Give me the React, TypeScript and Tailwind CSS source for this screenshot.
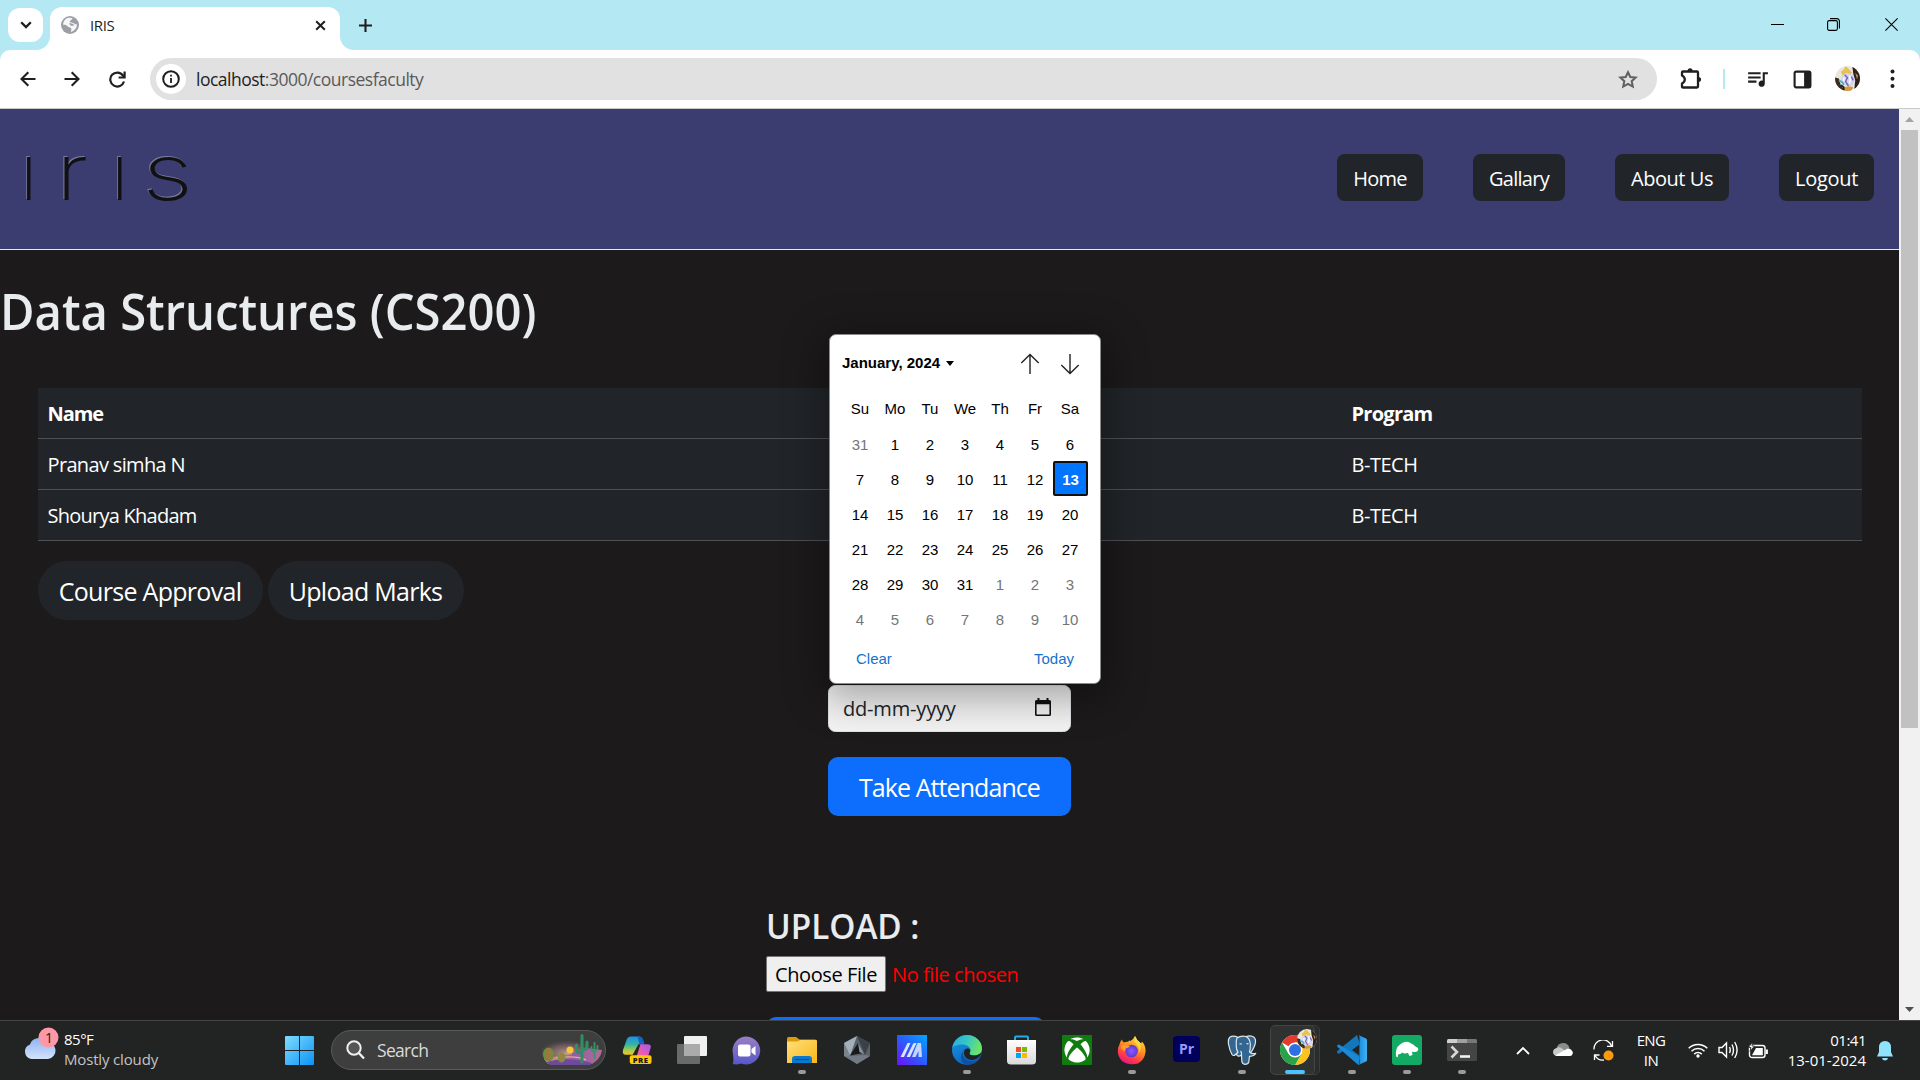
import type { ReactNode } from "react";
import { FaXbox } from "react-icons/fa";
import { MdQueueMusic } from "react-icons/md";

const weekdays = ["Su", "Mo", "Tu", "We", "Th", "Fr", "Sa"];
const days = [31, ...Array.from({ length: 31 }, (_, i) => i + 1), ...Array.from({ length: 10 }, (_, i) => i + 1)];

function Avatar({ size }: { size: number }) {
  return (
    <svg width={size} height={size} viewBox="0 0 26 26">
      <defs>
        <clipPath id={`av${size}`}>
          <circle cx="13" cy="13" r="13" />
        </clipPath>
      </defs>
      <g clipPath={`url(#av${size})`}>
        <rect width="26" height="26" fill="#e9e6dc" />
        <path d="M0 12 4 13 6 20 10 26H0Z" fill="#3b2c20" />
        <path d="M18 0 26 4V20L20 25 21 15 19 8Z" fill="#2c211c" />
        <path d="M21 7 24 10 23 14Z" fill="#b98a4a" />
        <path d="M6 6 9 4 11 0 15 4 18 7 15 9 8 10Z" fill="#e8c24e" />
        <path d="M7 10 12 7 18 9 21 15 17 22 11 20 6 16Z" fill="#d6d4f0" />
        <path d="M10 9 13 12 11 16 14 21M17 11 19 15" stroke="#6c62b8" strokeWidth="1.4" fill="none" />
        <path d="M15 10 16 14 15 18M9 12V16" stroke="#fff" strokeWidth="1.6" fill="none" />
        <path d="M4 15 8 17 9 20" stroke="#4fb3cc" strokeWidth="2" fill="none" />
        <path d="M10 22 14 21 19 22 17 26H9Z" fill="#d49a3c" />
        <path d="M6 20 9 22 9 25" stroke="#2a1d18" strokeWidth="2" fill="none" />
      </g>
    </svg>
  );
}

function TabStrip() {
  return (
    <div className="flex h-[50px] bg-[#b4e8f3]">
      <div className="mt-2 ml-2 flex h-[34px] w-[35px] items-center justify-center rounded-[12px] bg-white">
        <svg width="12" height="8" viewBox="0 0 12 8" fill="none" stroke="#1f1f1f" strokeWidth="2.3">
          <path d="M1.2 1.2 6 6 10.8 1.2" />
        </svg>
      </div>
      <div className="relative mt-[7px] ml-[7px] flex h-[43px] w-[290px] items-center rounded-t-[12px] bg-white pr-[14px] pb-[7px] pl-[11px]">
        <svg className="absolute bottom-0 -left-[14px]" width="14" height="14">
          <path d="M14 0V14H0A14 14 0 0 0 14 0Z" fill="#fff" />
        </svg>
        <svg className="absolute -right-[14px] bottom-0" width="14" height="14">
          <path d="M0 0V14H14A14 14 0 0 1 0 0Z" fill="#fff" />
        </svg>
        <svg width="18" height="18" viewBox="0 0 18 18">
          <circle cx="9" cy="9" r="9" fill="#9aa0a6" />
          <path d="M6 2.2C8 1.8 10 1.6 11.6 2.4 11 4 9.4 3.8 8.8 5 8.4 6.2 10 6.4 11.4 6.8 13 7.4 14.4 8.4 16 8.6 16 12 13.6 15 10 16 9.6 14.6 11 13.4 10.2 12.2 8.6 11 6.6 11 5.6 9.6 4.8 8.4 3 9 2 8.4 2.2 5.6 3.8 3.4 6 2.2Z" fill="#fff" opacity=".9" />
          <path d="M8.6 6.8C10 7.4 12 8 13.6 9.2 12.4 10 11 9.6 9.6 9.4 8.6 8.8 8.2 7.6 8.6 6.8Z" fill="#9aa0a6" />
        </svg>
        <span className="ml-[11px] flex-1 text-[15px] tracking-[-0.4px] text-[#1f1f1f]">IRIS</span>
        <svg width="11" height="11" viewBox="0 0 12 12" stroke="#1f1f1f" strokeWidth="2.2">
          <path d="M1.3 1.3 10.7 10.7M10.7 1.3 1.3 10.7" />
        </svg>
      </div>
      <svg className="mt-[18.5px] ml-[19px]" width="13" height="13" stroke="#1f1f1f" strokeWidth="2.1">
        <path d="M6.5 0V13M0 6.5H13" />
      </svg>
      <div className="mb-[2px] ml-auto flex items-center text-black">
        <svg className="mr-[43px]" width="13" height="13" stroke="currentColor" strokeWidth="1">
          <path d="M0 6.5H13" />
        </svg>
        <svg className="mr-[45px]" width="13" height="13" fill="none" stroke="currentColor" strokeWidth="1.1">
          <rect x=".6" y="2.6" width="9.8" height="9.8" rx="1.6" />
          <path d="M3 .6H10A2.4 2.4 0 0 1 12.4 3V10.4" />
        </svg>
        <svg className="mr-[22px]" width="13" height="13" stroke="currentColor" strokeWidth="1.1">
          <path d="M.4.4 12.6 12.6M12.6.4.4 12.6" />
        </svg>
      </div>
    </div>
  );
}

function Toolbar() {
  return (
    <div className="bg-[#b4e8f3]">
      <div className="flex h-[59px] items-center rounded-t-[10px] border-b border-[#c9c9c9] bg-white text-[#1f1f1f]">
        <svg className="ml-[20px]" width="16" height="16" viewBox="0 0 16 16" fill="none" stroke="currentColor" strokeWidth="2.1">
          <path d="M15.5 8H2M8.3 1.2 1.5 8 8.3 14.8" />
        </svg>
        <svg className="ml-[28px]" width="16" height="16" viewBox="0 0 16 16" fill="none" stroke="currentColor" strokeWidth="2.1">
          <path d="M.5 8H14M7.7 1.2 14.5 8 7.7 14.8" />
        </svg>
        <svg className="ml-[29px]" width="17" height="17" viewBox="0 0 17 17" fill="none" stroke="currentColor" strokeWidth="2.2">
          <path d="M15 10.5A7 7 0 1 1 14 4.5L15.5 6.2" />
          <path d="M15.6 .5V6.5H9.6" />
        </svg>
        <div className="ml-[24px] flex h-[42px] w-[1507px] items-center rounded-full bg-[#e1e1e1] pr-[19px] pl-[6px]">
          <div className="flex size-[30px] items-center justify-center rounded-full bg-white">
            <svg width="18" height="18" viewBox="0 0 18 18">
              <circle cx="9" cy="9" r="7.8" fill="none" stroke="#1f1f1f" strokeWidth="2" />
              <path d="M8.1 4.8H9.9V6.6H8.1ZM8.1 8H9.9V13H8.1Z" fill="#1f1f1f" />
            </svg>
          </div>
          <span className="ml-[10px] flex-1 pt-px text-[17.5px] tracking-[-0.5px] text-[#5a5a5a]">
            <span className="text-[#1f1f1f]">localhost</span>:3000/coursesfaculty
          </span>
          <svg width="20" height="19" viewBox="0 0 20 19" fill="none" stroke="#5f6063" strokeWidth="2">
            <path d="M10 2.2 12.3 7 17.6 7.6 13.7 11.2 14.8 16.5 10 13.8 5.2 16.5 6.3 11.2 2.4 7.6 7.7 7Z" />
          </svg>
        </div>
        <svg className="ml-[23px]" width="22" height="22" viewBox="0 0 22 22" fill="none" stroke="#1f1f1f" strokeWidth="2.3">
          <path d="M3 3.5H17Q18 3.5 18 4.5V18.5Q18 19.5 17 19.5H3Q2 19.5 2 18.5V15.5Q4.8 14 4.8 11.5 4.8 9 2 7.5V4.5Q2 3.5 3 3.5Z" strokeLinejoin="round" />
          <path d="M7.6 3A2.5 2.7 0 0 1 12.6 3ZM18.4 9A2.7 2.5 0 0 1 18.4 14Z" fill="#1f1f1f" stroke="none" />
        </svg>
        <div className="ml-[21px] h-[20px] w-[2px] bg-[#b4e8f3]" />
        <MdQueueMusic className="mb-px ml-[20px]" size={25} />
        <svg className="ml-[23px]" width="19" height="19" viewBox="0 0 18 19">
          <rect x="1.1" y="1.6" width="15.8" height="15.8" rx="1.6" fill="none" stroke="#1f1f1f" strokeWidth="2.1" />
          <path d="M10.6 1.5H17V17.5H10.6Z" fill="#1f1f1f" />
        </svg>
        <div className="mb-[2px] ml-[23px]">
          <Avatar size={25} />
        </div>
        <svg className="ml-[30px]" width="5" height="20" fill="#1f1f1f">
          <circle cx="2.5" cy="2.5" r="2" />
          <circle cx="2.5" cy="9.7" r="2" />
          <circle cx="2.5" cy="17" r="2" />
        </svg>
      </div>
    </div>
  );
}

function NavButton({ width, children }: { width: string; children: ReactNode }) {
  return (
    <div className={`flex h-[47px] items-center justify-center rounded-[7.5px] bg-[#212529] pt-[2px] text-[20px] text-white ${width}`}>
      {children}
    </div>
  );
}

function SiteHeader() {
  return (
    <header className="flex h-[141px] items-start justify-between border-b border-[#e9e6f5] bg-[#3b3d70] pr-[25px]">
      <div className="flex pt-[15px] pl-[20px] font-['Inter'] text-[78px] leading-[96px] font-extralight text-[#111114] [text-shadow:-0.8px_-0.8px_0_rgba(200,200,210,0.45)]">
        <span className="w-[36px]">ı</span>
        <span className="w-[55px] origin-left scale-x-120">r</span>
        <span className="w-[31px]">ı</span>
        <span className="origin-left scale-x-130">s</span>
      </div>
      <nav className="mt-[45px] flex gap-[50px]">
        <NavButton width="w-[86px] tracking-[-0.76px]">Home</NavButton>
        <NavButton width="w-[92px] tracking-[-0.72px]">Gallary</NavButton>
        <NavButton width="w-[114px] tracking-[-0.45px]">About Us</NavButton>
        <NavButton width="w-[95px] tracking-[-0.29px]">Logout</NavButton>
      </nav>
    </header>
  );
}

function StudentTable() {
  return (
    <table className="mx-[38px] mt-[47px] w-[1824px] table-fixed bg-[#212529] text-left text-[20px] leading-[30px] text-white [&_td]:px-[9.5px] [&_td]:pt-[11px] [&_td]:pb-[9px] [&_th]:px-[9.5px] [&_th]:pt-[11px] [&_th]:pb-[9px] [&_tr]:border-b [&_tr]:border-[#4d5154]">
      <thead>
        <tr>
          <th className="w-[660px] tracking-[-1.1px]">Name</th>
          <th />
          <th className="w-[520px] tracking-[-0.73px]">Program</th>
        </tr>
      </thead>
      <tbody>
        <tr>
          <td className="tracking-[-0.65px]">Pranav simha N</td>
          <td />
          <td className="tracking-[-0.47px]">B-TECH</td>
        </tr>
        <tr>
          <td className="tracking-[-0.75px]">Shourya Khadam</td>
          <td />
          <td className="tracking-[-0.47px]">B-TECH</td>
        </tr>
      </tbody>
    </table>
  );
}

function DatePicker() {
  return (
    <div className="absolute top-[-351px] left-px z-10 h-[350px] w-[272px] rounded-[7px] border border-[#8b8b8b] bg-white font-['Liberation_Sans'] text-[15px] text-black shadow-[0_8px_40px_8px_rgba(0,0,0,0.32)]">
      <div className="flex h-[56px] items-center pl-[12px] font-bold">
        <span>January, 2024</span>
        <svg className="ml-[6px]" width="8" height="5">
          <path d="M0 0H8L4 5Z" />
        </svg>
        <svg className="mt-px ml-auto" width="20" height="22" fill="none" stroke="#222" strokeWidth="1.4">
          <path d="M10 21V1.5M1.3 10 10 1.5 18.7 10" />
        </svg>
        <svg className="mt-px mr-[20px] ml-[20px]" width="20" height="22" fill="none" stroke="#222" strokeWidth="1.4">
          <path d="M10 1V20.5M1.3 12 10 20.5 18.7 12" />
        </svg>
      </div>
      <div className="mr-[12px] ml-[13px] grid grid-cols-7 text-center">
        {weekdays.map((d) => (
          <span key={d} className="h-[35px] pr-px leading-[36px]">
            {d}
          </span>
        ))}
        {days.map((d, i) =>
          i === 13 ? (
            <span key={i} className="h-[35px] rounded-[2px] border-2 border-[#101010] bg-[#0075ff] leading-[33px] font-bold text-white">
              {d}
            </span>
          ) : (
            <span key={i} className={`h-[35px] pr-px leading-[38px] ${i < 1 || i > 31 ? "text-[#757575]" : ""}`}>
              {d}
            </span>
          ),
        )}
      </div>
      <div className="mt-[13px] flex justify-between pr-[26px] pl-[26px] leading-[20px] text-[#1372cf]">
        <span>Clear</span>
        <span>Today</span>
      </div>
    </div>
  );
}

function Page() {
  return (
    <main className="h-[911px] w-[1899px] overflow-hidden bg-[#1c1a1b]">
      <SiteHeader />
      <h1 className="mt-[31px] w-max origin-left scale-x-[0.943] text-[50px] leading-[60px] font-semibold text-[#e9ecef]">Data Structures (CS200)</h1>
      <StudentTable />
      <div className="mt-5 ml-[38px] flex gap-[5px] text-[25px] text-white">
        <div className="flex h-[59px] w-[225px] items-center justify-center rounded-[30px] bg-[#212529] pt-[2px] pr-px tracking-[-0.7px]">Course Approval</div>
        <div className="flex h-[59px] w-[196px] items-center justify-center rounded-[30px] bg-[#212529] pt-[2px] pr-px tracking-[-0.73px]">Upload Marks</div>
      </div>
      <div className="relative mt-[65px] ml-[828px] w-[243px]">
        <DatePicker />
        <div className="flex h-[47px] items-center justify-between rounded-[7.5px] border border-[#dee2e6] bg-[#f4f4f4] pr-[19px] pl-[14px] text-[#212529]">
          <span className="pt-px text-[20px] tracking-[-0.18px]">dd-mm-yyyy</span>
          <svg className="mb-[3px]" width="16" height="18" viewBox="0 0 16 18">
            <path d="M2.5 0H4.5V2H11.5V0H13.5V2H14.5Q16 2 16 3.5V16.5Q16 18 14.5 18H1.5Q0 18 0 16.5V3.5Q0 2 1.5 2H2.5ZM1.6 6.2V16.4H14.4V6.2Z" fill="#111" fillRule="evenodd" />
          </svg>
        </div>
        <div className="mt-[25px] flex h-[59px] items-center justify-center rounded-[10px] bg-[#0d6efd] pt-[2px] text-[25px] tracking-[-0.93px] text-white">Take Attendance</div>
      </div>
      <section className="mt-[89px] ml-[766px]">
        <h2 className="w-max origin-left scale-x-95 text-[35px] leading-[42px] font-semibold text-[#e9ecef]">UPLOAD :</h2>
        <div className="mt-[9px] flex items-center text-[20px] text-[#ff0000]">
          <div className="flex h-[36px] w-[120px] items-center justify-center rounded-[2px] border border-[#767676] bg-[#efefef] pt-[2px] tracking-[-0.41px] text-black">Choose File</div>
          <span className="ml-[6px] pt-[2px] tracking-[-0.43px]">No file chosen</span>
        </div>
        <div className="mt-[25px] h-[59px] w-[279px] rounded-[10px] bg-[#0d6efd]" />
      </section>
    </main>
  );
}

function ScrollBar() {
  return (
    <div className="flex h-[911px] w-[21px] flex-col items-center justify-between bg-[#f1f1f1]">
      <div className="flex flex-col items-center">
        <svg className="my-[8px]" width="9" height="5">
          <path d="M0 5H9L4.5 0Z" fill="#a3a3a3" />
        </svg>
        <div className="h-[598px] w-[17px] bg-[#c1c1c1]" />
      </div>
      <svg className="mb-[8px]" width="9" height="5">
        <path d="M0 0H9L4.5 5Z" fill="#505050" />
      </svg>
    </div>
  );
}

function TaskIcon({ running = false, children }: { running?: boolean; children: ReactNode }) {
  return (
    <div className="flex w-[55px] flex-col items-center">
      <div className="mt-[13px] flex h-[32px] items-center">{children}</div>
      {running && <div className="mt-[4px] h-[4px] w-[8px] rounded-full bg-[#9a9a9a]" />}
    </div>
  );
}

function Defs() {
  return (
    <svg className="absolute size-0">
      <defs>
        <linearGradient id="win" x1="0" y1="0" x2="1" y2="1"><stop stopColor="#7fdcff" /><stop offset="1" stopColor="#0c93f5" /></linearGradient>
        <linearGradient id="copA" x1="0" y1="0" x2="0" y2="1"><stop stopColor="#1f8fe8" /><stop offset=".45" stopColor="#36b5a0" /><stop offset=".8" stopColor="#b5cf3c" /><stop offset="1" stopColor="#f5c518" /></linearGradient>
        <linearGradient id="copB" x1="1" y1="0" x2="0" y2="1"><stop stopColor="#a259f0" /><stop offset=".5" stopColor="#e45ab8" /><stop offset="1" stopColor="#fb7a5c" /></linearGradient>
        <linearGradient id="cloud" x1="0" y1="0" x2="0" y2="1"><stop stopColor="#8fb4f0" /><stop offset="1" stopColor="#d3e2fb" /></linearGradient>
        <linearGradient id="chat" x1="0" y1="0" x2="0" y2="1"><stop stopColor="#9b7fc4" /><stop offset="1" stopColor="#5558c9" /></linearGradient>
        <linearGradient id="fold" x1="0" y1="0" x2="1" y2="1"><stop stopColor="#ffe07a" /><stop offset="1" stopColor="#f9b618" /></linearGradient>
        <linearGradient id="asus" x1="1" y1="0" x2="0" y2="1"><stop stopColor="#00a8ff" /><stop offset=".5" stopColor="#2b5cff" /><stop offset="1" stopColor="#7010f5" /></linearGradient>
        <linearGradient id="edgeA" x1="0" y1="0" x2="1" y2=".3"><stop stopColor="#2aa9e0" /><stop offset=".5" stopColor="#35c4c8" /><stop offset="1" stopColor="#6be36a" /></linearGradient>
        <linearGradient id="edgeB" x1="0" y1="0" x2=".5" y2="1"><stop stopColor="#1b9de2" /><stop offset="1" stopColor="#0a62c4" /></linearGradient>
        <linearGradient id="ff" x1=".8" y1="0" x2=".3" y2="1"><stop stopColor="#ffe14a" /><stop offset=".4" stopColor="#ff9a1f" /><stop offset=".75" stopColor="#ff3b47" /><stop offset="1" stopColor="#e3158a" /></linearGradient>
        <radialGradient id="ffB"><stop stopColor="#9059ff" /><stop offset="1" stopColor="#5b3bd6" /></radialGradient>
        <linearGradient id="vs" x1="0" y1="0" x2="1" y2="0"><stop stopColor="#1a8ad6" /><stop offset="1" stopColor="#3fb2f5" /></linearGradient>
        <linearGradient id="store" x1="0" y1="0" x2="0" y2="1"><stop stopColor="#ffffff" /><stop offset="1" stopColor="#d9d9d9" /></linearGradient>
        <radialGradient id="sky" cx=".45" cy=".6"><stop stopColor="#e0aca4" stopOpacity=".85" /><stop offset=".6" stopColor="#a88080" stopOpacity=".45" /><stop offset="1" stopColor="#6a5558" stopOpacity="0" /></radialGradient>
        <linearGradient id="sand" x1="0" y1="0" x2="1" y2="0"><stop stopColor="#e0a078" /><stop offset=".5" stopColor="#8c5ea8" /><stop offset="1" stopColor="#b56a9a" /></linearGradient>
      </defs>
    </svg>
  );
}

function Taskbar() {
  return (
    <div className="flex h-[60px] border-t border-[#444444] bg-[#222323] text-[15px] text-white">
      <Defs />
      <div className="flex w-[285px] pl-[24px]">
        <svg className="mt-[5px]" width="36" height="38" viewBox="0 0 36 38">
          <circle cx="23" cy="18" r="6" fill="#f5811f" />
          <path d="M7.5 35A7.5 7.5 0 0 1 6 20.5 9 9 0 0 1 22 18 8.5 8.5 0 0 1 24 35Z" fill="url(#cloud)" transform="translate(0 -2)" />
          <circle cx="24.5" cy="11.5" r="10" fill="#ff98a6" />
          <text x="25" y="16.5" textAnchor="middle" fontSize="14" fill="#2a1a1c" fontFamily="Open Sans">1</text>
        </svg>
        <div className="ml-[4px] pt-[8px] leading-[20px]">
          <div className="tracking-[-0.5px]">85°F</div>
          <div className="tracking-[-0.16px] text-[#c4c4c4]">Mostly cloudy</div>
        </div>
      </div>
      <svg className="mt-[15px]" width="29" height="29" fill="url(#win)">
        <path d="M0 1Q0 0 1 0H14V14H0ZM15 0H28Q29 0 29 1V14H15ZM0 15H14V29H1Q0 29 0 28ZM15 15H29V28Q29 29 28 29H15Z" />
      </svg>
      <div className="mt-[9px] ml-[17px] flex h-[40px] w-[275px] items-center rounded-full border border-[#5a5a5a] bg-[#3e3e3e] pl-[14px]">
        <svg width="19" height="20" viewBox="0 0 19 20" fill="none" stroke="#f0f0f0" strokeWidth="2">
          <circle cx="8" cy="8" r="6.7" fill="#555" />
          <path d="M12.8 13 18 18.5" strokeWidth="2.4" />
        </svg>
        <span className="ml-[12px] flex-1 pt-px text-[17.5px] tracking-[-0.7px] text-[#dadada]">Search</span>
        <svg className="mr-[3px]" width="60" height="34" viewBox="0 0 60 34">
          <ellipse cx="28" cy="18" rx="30" ry="14" fill="url(#sky)" />
          <circle cx="28" cy="17" r="3.5" fill="#ffc53a" />
          <path d="M30 20 44 15 60 17Q59 24 54 28L50 31H6L2 26Q16 22 30 22Z" fill="url(#sand)" />
          <path d="M4 29Q24 23 50 30L48 32H8Z" fill="#6d4a9a" />
          <path d="M14 25Q34 22 44 27" stroke="#f0a888" strokeWidth="1.5" fill="none" />
          <ellipse cx="6.5" cy="21.5" rx="5.5" ry="7" fill="#6c8f3a" />
          <ellipse cx="19.5" cy="24.5" rx="4" ry="5" fill="#7f9440" />
          <path d="M4 17V27M6.5 15V28M9 17V27M18 21V29M21 21V29" stroke="#c06a4a" strokeWidth=".8" />
          <path d="M40 29V2.5M34.5 12V17Q34.5 19.5 37 19.5H40M45 9V14Q45 16.5 42 16.5H40" stroke="#2f8f62" strokeWidth="3" strokeLinecap="round" fill="none" />
          <path d="M52.5 25V10M49.5 14V16.5Q49.5 18.5 52 18.5M55.5 13V15.5Q55.5 17.5 53 17.5" stroke="#3a9468" strokeWidth="1.8" strokeLinecap="round" fill="none" />
        </svg>
      </div>

      <div className="ml-[3px] flex">
        <TaskIcon>
          <svg width="30" height="30" viewBox="0 0 31 30">
            <path d="M9 1H18Q20.5 1 21.5 4L23 9H17L11 20H4Q0 20 1 15L5 4Q6 1 9 1Z" fill="url(#copA)" />
            <path d="M16 1H18Q20.5 1 21.5 4L23 9H18Z" fill="#1463c4" />
            <path d="M19 9H26Q31 9 29.5 13L27.5 20 22 24H12Q15 23 16 19Z" fill="url(#copB)" />
            <rect x="8" y="20.5" width="22.5" height="9" rx="2" fill="#ffc708" />
            <text x="19.3" y="28" textAnchor="middle" fontSize="8" fontWeight="800" letterSpacing=".5" fill="#1a1a1a" fontFamily="Open Sans">PRE</text>
          </svg>
        </TaskIcon>
        <TaskIcon>
          <svg width="30" height="28" viewBox="0 0 30 28">
            <rect x="0" y="8" width="23" height="20" rx="1" fill="#6a6a6a" />
            <rect x="7" y="0" width="23" height="20" rx="1" fill="#f0f0f0" />
            <path d="M7 8H23V20H7Z" fill="#ababab" />
          </svg>
        </TaskIcon>
        <TaskIcon>
          <svg className="mr-px" width="29" height="29" viewBox="0 0 29 29">
            <path d="M14.5 0.5A14 14 0 1 1 9 27.5Q5 29 .8 28 2 25 .8 17A14 14 0 0 1 14.5 .5Z" fill="url(#chat)" />
            <rect x="6" y="8.5" width="12.5" height="12" rx="2" fill="#fff" />
            <path d="M19.5 13 23.5 10V19.5L19.5 16.5Z" fill="#fff" />
          </svg>
        </TaskIcon>
        <TaskIcon running>
          <svg width="30" height="28" viewBox="0 0 30 28">
            <path d="M0 2.5Q0 1 1.5 1H9L12.5 3.5H28Q30 3.5 30 5V12H0Z" fill="#dd9a06" />
            <path d="M0 5.5H10L13.5 4H29Q30 4 30 5.5V27H0Z" fill="url(#fold)" />
            <path d="M5 27V23Q5 20 8 20H22Q25 20 25 23V27Z" fill="#0c79d0" />
            <path d="M8 23.5H22" stroke="#0a4f94" strokeWidth="1.2" />
          </svg>
        </TaskIcon>
        <TaskIcon>
          <svg width="26" height="28" viewBox="0 0 26 28">
            <path d="M13 0 26 7V20L13 28 0 20V7Z" fill="#59616a" />
            <path d="M13 0 26 7 21 19Z" fill="#3c4148" />
            <path d="M13 0 0 7 6 20Z" fill="#a4aeb8" />
            <path d="M0 20 6 20 21 19 26 20 13 28Z" fill="#727b85" />
            <path d="M0 7 6 20H0Z" fill="#7b848e" />
            <path d="M14 7 19 17 6 19.5Z" fill="#17191c" />
            <path d="M14 7 20 18 15.5 16Z" fill="#8d97a1" />
          </svg>
        </TaskIcon>
        <TaskIcon>
          <svg width="30" height="30" viewBox="0 0 30 30">
            <rect width="30" height="30" fill="url(#asus)" />
            <path d="M3.5 22 10.5 8H13.5L7 22ZM9.5 22 16 9Q16.500 8 18 8H19.5L13 22Z" fill="#d9e4ff" />
            <path d="M20.5 8H24L25 22H21.5V16L18.5 22H15Z" fill="#c3d4ff" />
          </svg>
        </TaskIcon>
        <TaskIcon running>
          <svg width="30" height="30" viewBox="0 0 30 30">
            <circle cx="15" cy="15" r="15" fill="url(#edgeB)" />
            <path d="M.2 13C1.5 5 8 0 15 0 24 0 30 6.5 30 13.5 30 18.5 26 20.5 22 20.5 18.5 20.5 17 19.3 17.8 18 19.5 15.5 18 10 11.5 9.5 6 9.2 1.5 11 .2 13Z" fill="url(#edgeA)" />
            <path d="M12.5 15C10 18 10.5 24 17 26 21 27.3 25.5 25.5 28 23 25 28 20 30 15.5 30 8.5 29 6.5 20 12.5 15Z" fill="#124f9c" />
            <path d="M12.5 15C14 13.5 16.5 13 18.2 14.5 18.3 16 18 17.3 17.5 18.3 17.2 19.5 18.5 20.5 22 20.5 25.5 20.5 28 19 30 17 28.5 22 23 26.5 17 24.5 12.5 23 11 18.5 12.5 15Z" fill="#1f2223" />
          </svg>
        </TaskIcon>
        <TaskIcon>
          <svg width="29" height="30" viewBox="0 0 29 30">
            <path d="M8 6V2.5Q8 1.5 9 1.5H20Q21 1.5 21 2.5V6" fill="none" stroke="#1fb0e8" strokeWidth="2" />
            <path d="M0 5H29V26Q29 29.5 25 29.5H4Q0 29.5 0 26Z" fill="url(#store)" />
            <path d="M9 12H14V17H9Z" fill="#f25022" />
            <path d="M15 12H20V17H15Z" fill="#7fba00" />
            <path d="M9 18H14V23H9Z" fill="#00a4ef" />
            <path d="M15 18H20V23H15Z" fill="#ffb900" />
          </svg>
        </TaskIcon>
        <TaskIcon>
          <div className="flex size-[30px] items-center justify-center rounded-[1px] bg-[#107c10]">
            <FaXbox size={26} color="#fff" />
          </div>
        </TaskIcon>
        <TaskIcon running>
          <svg width="29" height="30" viewBox="0 0 29 30">
            <path d="M2 11Q2.5 7 5 4.5 5.2 6.5 7 7.5 9 6.5 11 6.8 13 4.5 13.5 6 16 5 18 1 19.5 5 23 7.5 24.5 9 25 6.5 29 11 28.5 17 27.5 25 21 28.5 12 31 5 26 0 21 1 14 1 12 2 11Z" fill="url(#ff)" />
            <circle cx="14.5" cy="16" r="6.3" fill="url(#ffB)" />
            <path d="M4 11Q9 8 13 11.5 11 13 8.5 13.5 9 16 7.5 16 4 14.5 4 11Z" fill="#ff9a2a" />
            <path d="M18 1Q16 6 20 10 23 13 21.5 18 25 14 23 7.5 19.5 5 18 1Z" fill="#ffd83c" />
          </svg>
        </TaskIcon>
        <TaskIcon>
          <div className="mb-[3px] flex h-[26px] w-[27px] items-center justify-center rounded-[4px] bg-[#00005b] text-[14px] font-bold text-[#9999ff]">Pr</div>
        </TaskIcon>
        <TaskIcon running>
          <svg width="30" height="30" viewBox="0 0 30 30" fill="#336791" stroke="#dfe6ec" strokeWidth="1.2" strokeLinejoin="round">
            <path d="M11 2.2Q6 .2 3 2 .8 4 1.5 9 2.500 15 5 19.5 6.5 21.500 8.500 19.5L11 17Z" />
            <path d="M19 1.500Q24-.2 27 2.200 29.500 5 28 9.500 26.500 14 24 17.500L19 15Z" />
            <path d="M10 3Q14 .2 19 1.500 23 3.500 23.300 9 23.500 13 22.500 17 24 19.500 28.800 18.300 27 21.500 22.500 21.300L21.800 27Q21 29.300 18 29.300 15 29 14.800 26L14.500 20Q11 22.500 9.500 19.500L11 17Q9 15 9.300 10 9 5 10 3Z" />
            <path d="M12.5 9Q14 8.300 14.500 9.500M19.500 9Q20.500 8.200 21.500 9M14.500 20Q15 17.500 13.500 16" fill="none" />
          </svg>
        </TaskIcon>
        <div className="relative mt-[4px] mr-[4px] ml-px h-[50px] w-[50px]">
          <div className="absolute inset-y-0 left-[2px] w-[48px] rounded-[5px] border border-[#3c3c3c] bg-[#2a2b2b]" />
          <div className="relative h-[50px] w-[45px] rounded-[5px] border border-[#434444] bg-[#303131]">
            <svg className="absolute top-[9px] left-[9px]" width="30" height="30" viewBox="0 0 30 30">
              <circle cx="15" cy="15" r="15" fill="#fff" />
              <path d="M15 15 2 7.5A15 15 0 0 1 28 7.5H15Z" fill="#e33b2e" />
              <path d="M28 7.5A15 15 0 0 1 15 30L21.5 18.7 15 7.5Z" fill="#fcc31e" />
              <path d="M2 7.5A15 15 0 0 0 15 30L21.5 18.7 15 22 8.5 18.7Z" fill="#2aa24a" />
              <circle cx="15" cy="15" r="7.5" fill="#fff" />
              <circle cx="15" cy="15" r="6" fill="#2f6fe4" />
            </svg>
            <div className="absolute top-[3px] left-[26px]">
              <Avatar size={20} />
            </div>
            <div className="absolute bottom-0 left-[14px] h-[4px] w-[20px] rounded-full bg-[#4cc2ff]" />
          </div>
        </div>
        <TaskIcon running>
          <svg width="30" height="30" viewBox="0 0 30 30">
            <path d="M21.5 0 6 14 2.5 11.5Q1.5 11 1 11.6L0 12.7Q-.3 13.500 .5 14.2L20 30 22.5 22V8Z" fill="#1277bd" transform="translate(0 30) scale(1 -1)" />
            <path d="M1 9.8Q1.5 9 2.5 9.8L22.5 22 21.5 30 .5 12Q-.3 11.200 .3 10.5Z" fill="#1a8ad6" />
            <path d="M22.5 9.500V20.500L15 15Z" fill="#222323" />
            <path d="M21.5 0 29 3.5Q30 4 30 5V25Q30 26 29 26.5L21.5 30Q22.5 29 22.5 28V2Q22.5 1 21.5 0Z" fill="url(#vs)" />
          </svg>
        </TaskIcon>
        <TaskIcon running>
          <svg width="30" height="30" viewBox="0 0 30 30">
            <rect width="30" height="30" rx="3" fill="#13aa63" />
            <path d="M4 21Q3 13 8 9.5 13 5 18.5 8 22 9.5 23.5 11.5L26 13Q27 15 25 16.5 22 17.5 20 16.5L20.5 20 17.5 21 16 18Q12 19 10 17.5L8.5 19Q5.5 18.5 5.8 22Q4.5 22.5 4 21Z" fill="#fff" />
          </svg>
        </TaskIcon>
        <TaskIcon running>
          <svg width="30" height="22" viewBox="0 0 30 22">
            <rect width="30" height="22" rx="1.5" fill="#454545" />
            <path d="M0 4V1.5Q0 0 1.5 0H10V4Z" fill="#cfcfcf" />
            <path d="M10 0H20V4H10Z" fill="#a0a0a0" />
            <path d="M20 0H28.5Q30 0 30 1.5V4H20Z" fill="#777" />
            <path d="M4.5 7.5 10 13 4.5 18.5" stroke="#d8d8d8" strokeWidth="2.6" fill="none" />
            <path d="M13 17.5H23" stroke="#f3f3f3" strokeWidth="2.6" />
          </svg>
        </TaskIcon>
      </div>

      <div className="ml-auto flex h-[58px] w-[417px] items-center">
        <div className="flex w-[40px] justify-center">
          <svg width="14" height="9" fill="none" stroke="#fff" strokeWidth="1.8">
            <path d="M1 8 7 2 13 8" />
          </svg>
        </div>
        <div className="flex w-[40px] justify-center">
          <svg width="20" height="14" viewBox="0 0 20 14">
            <path d="M3 6Q5 0 10 0 15 0 16.5 5L10 9Z" fill="#8c8c8c" />
            <path d="M4 13Q0 12.5 0 9 .2 5.5 4 5 6 3.5 9 5.5L17 11 15 13Z" fill="#c8c8c8" />
            <path d="M2 12.5 13 6.5Q15 4.5 18 6.5 20 8.5 19.8 10.5 19 13 17 13H4Z" fill="#fff" />
          </svg>
        </div>
        <div className="flex w-[40px] justify-center">
          <svg width="21" height="21" viewBox="0 0 21 21" fill="none" stroke="#fff" strokeWidth="1.3">
            <path d="M1 9.5A9 9 0 0 1 18.5 6M19.5 1V6.3H14M1.5 20V15H6.5M2 15.5A9 9 0 0 0 11 20" />
            <circle cx="15.5" cy="15.5" r="5" fill="#ff9a0a" stroke="none" />
          </svg>
        </div>
        <div className="w-[56px] text-center leading-[20px] tracking-[-0.6px]">
          ENG
          <br />
          IN
        </div>
        <div className="ml-[4px] flex w-[30px] justify-center">
          <svg width="20" height="15" viewBox="0 0 20 15" fill="none" stroke="#fff" strokeWidth="1.5">
            <path d="M.7 5.3A13 13 0 0 1 19.3 5.3M3.5 8.3A9.2 9.2 0 0 1 16.5 8.3M6.2 11.1A5.4 5.4 0 0 1 13.8 11.1" />
            <circle cx="10" cy="13" r="1.7" fill="#fff" stroke="none" />
          </svg>
        </div>
        <div className="flex w-[30px] justify-center">
          <svg width="20" height="18" viewBox="0 0 20 18" fill="none" stroke="#fff" strokeWidth="1.4">
            <path d="M1 6.5H4L8.5 2V16L4 11.5H1ZM11.5 6Q13 9 11.5 12M14 3.5Q17 9 14 14.5M16.7 1Q21.5 9 16.7 17" />
          </svg>
        </div>
        <div className="flex w-[30px] justify-center">
          <svg width="21" height="17" viewBox="0 0 21 17" fill="none" stroke="#fff" strokeWidth="1.4">
            <rect x="1.5" y="3.5" width="15.5" height="12" rx="2.5" />
            <path d="M4 13.3 8 6H14.8V13.3Z" fill="#fff" stroke="none" />
            <path d="M18.8 7.5V12" strokeWidth="2.2" />
            <path d="M4.5 0 .5 5.5H3L2 9.5 6.5 4H4Z" fill="#fff" stroke="#222323" strokeWidth=".8" />
          </svg>
        </div>
        <div className="flex-1 text-right leading-[20px] whitespace-nowrap">
          <div className="-mt-px tracking-[-0.5px]">01:41</div>
          <div>13-01-2024</div>
        </div>
        <svg className="mt-px mr-[27px] ml-[11px]" width="16" height="20" viewBox="0 0 16 20" fill="#8fe3fb">
          <path d="M8 0Q14 0 14 6.5V11L16 15.5H0L2 11V6.5Q2 0 8 0ZM5 17H11Q10.5 19.5 8 19.5 5.5 19.5 5 17Z" />
        </svg>
      </div>
    </div>
  );
}

export default function App() {
  return (
    <div className="h-[1080px] w-[1920px] overflow-hidden bg-white font-['Open_Sans',sans-serif]">
      <TabStrip />
      <Toolbar />
      <div className="flex">
        <Page />
        <ScrollBar />
      </div>
      <Taskbar />
    </div>
  );
}
